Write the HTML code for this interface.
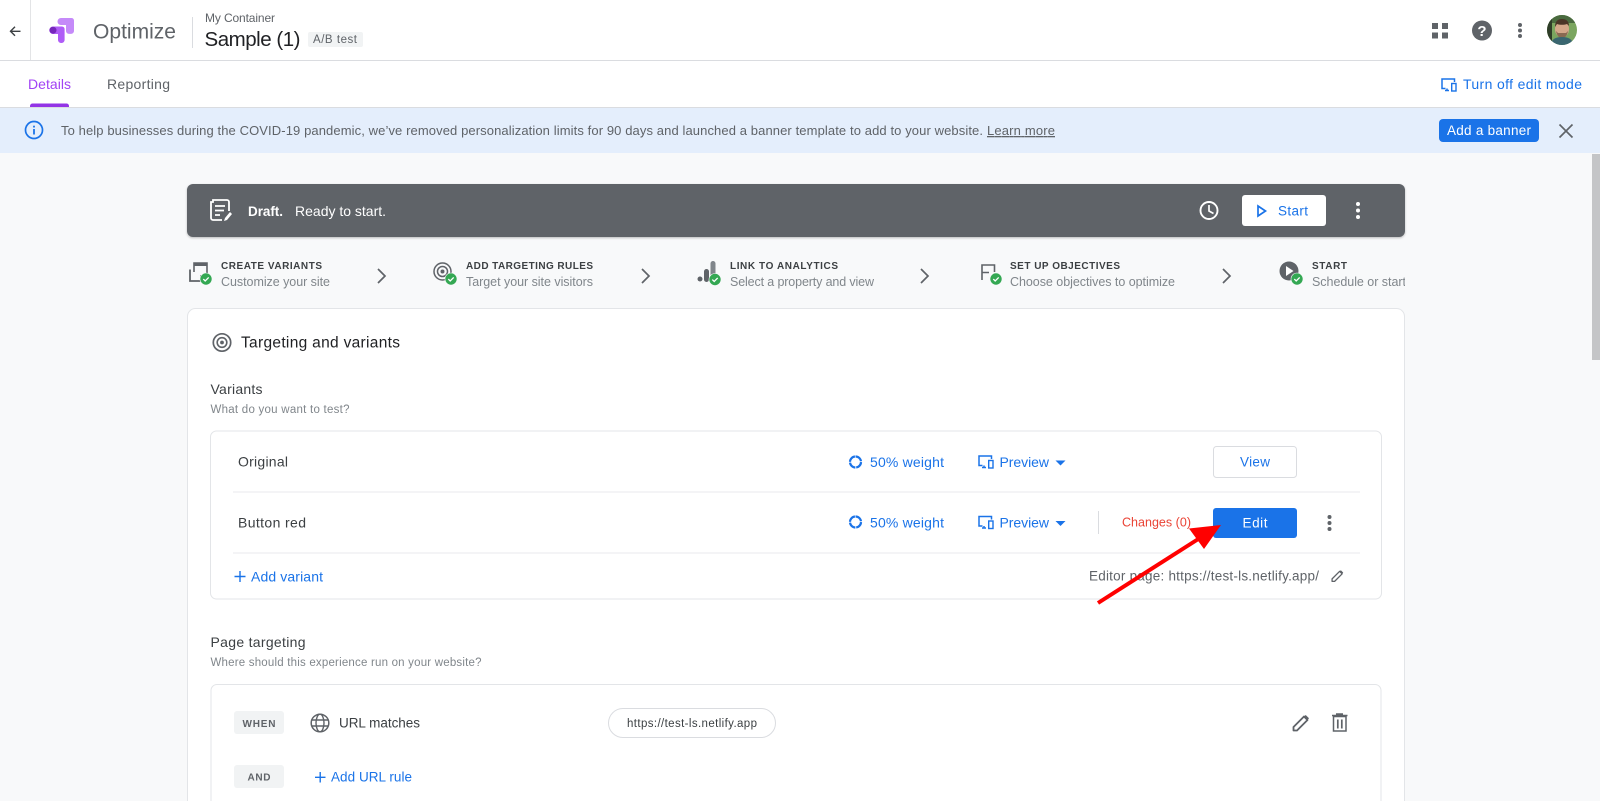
<!DOCTYPE html>
<html lang="en">
<head>
<meta charset="utf-8">
<title>Optimize</title>
<style>
html,body{margin:0;padding:0;width:1600px;height:801px;overflow:hidden;background:#f8f9fa}
svg{display:block}
text{font-family:"Liberation Sans",Arial,sans-serif;white-space:pre}
.t13{font-size:14px}.t12{font-size:12.500px}.t11{font-size:11.500px}
.blue{fill:#1a73e8}.gray{fill:#5f6368}.dark{fill:#202124}.mid{fill:#3c4043}.lt{fill:#80868b}
.cap{font-size:10px;font-weight:bold;fill:#3c4043}
.sub{font-size:12.500px;fill:#80868b}
</style>
</head>
<body>
<svg width="1600" height="801" viewBox="0 0 1600 801" xmlns="http://www.w3.org/2000/svg">
<defs>
<symbol id="prev" viewBox="0 0 16 14" overflow="visible">
<path d="M4.500 10.500H1V1h12.500v3M4 12.500h4M6 10.500v2" fill="none" stroke="#1a73e8" stroke-width="1.500"/>
<rect x="10.700" y="5.500" width="4.300" height="7.500" fill="none" stroke="#1a73e8" stroke-width="1.400"/>
</symbol>
<symbol id="weight" viewBox="0 0 14 14" overflow="visible">
<circle cx="7" cy="7" r="5.500" fill="none" stroke="#1a73e8" stroke-width="2.200" stroke-dasharray="7.800 .85" transform="rotate(-90 7 7)"/>
</symbol>
<symbol id="badge" viewBox="0 0 12 12" overflow="visible">
<circle cx="6" cy="6" r="6.300" fill="#f8f9fa"/>
<circle cx="6" cy="6" r="5.700" fill="#34a853"/>
<path d="M3.300 6.100l1.900 1.900 3.500-3.600" fill="none" stroke="#fff" stroke-width="1.300"/>
</symbol>
<symbol id="chev" viewBox="0 0 10 16" overflow="visible">
<path d="M1 1l7 7-7 7" fill="none" stroke="#5f6368" stroke-width="1.700"/>
</symbol>
<symbol id="pen" viewBox="0 0 18 18" overflow="visible">
<path d="M1.500 16.500v-3.500L12 2.500l3.500 3.500L5 16.500z" fill="none" stroke="#5f6368" stroke-width="1.800" stroke-linejoin="round"/>
<path d="M11.500 3l3.500 3.500 2-2.200-3.300-3.300z" fill="#5f6368"/>
</symbol>
<clipPath id="av"><circle cx="1562" cy="30" r="15"/></clipPath>
<clipPath id="stepclip"><rect x="170" y="250" width="1235" height="50"/></clipPath>
<filter id="soft" x="-5%" y="-20%" width="110%" height="140%"><feDropShadow dx="0" dy="1" stdDeviation="1" flood-color="#000" flood-opacity=".25"/></filter>
</defs>

<rect width="1600" height="801" fill="#f8f9fa"/>

<!-- header -->
<rect width="1600" height="60" fill="#fff"/>
<rect y="60" width="1600" height="1" fill="#dadce0"/>
<rect x="30" width="1" height="60" fill="#e3e4e6"/>
<path d="M20.500 31.300H11M15 26.800l-4.500 4.500 4.500 4.500" fill="none" stroke="#3c4043" stroke-width="1.400"/>
<path d="M61 18h10.500a2.500 2.500 0 0 1 2.500 2.500V31a2.900 2.900 0 0 1-2.900 2.900h-2.200a2.900 2.900 0 0 1-2.900-2.900v-6H61a3.500 3.500 0 0 1 0-7z" fill="#c58af9"/>
<path d="M53 26.500h9a2.600 2.600 0 0 1 2.600 2.600V40a3 3 0 0 1-3 3h-.6a3 3 0 0 1-3-3v-6H53a3.700 3.700 0 0 1 0-7.500z" fill="#af5cf7"/>
<circle cx="53" cy="30.200" r="3.500" fill="#7627bb"/>
<text x="93" y="38.500" font-size="21.500" fill="#5f6368" textLength="83" lengthAdjust="spacingAndGlyphs">Optimize</text>
<rect x="192" y="17" width="1" height="31" fill="#dadce0"/>
<text x="205" y="22" font-size="12" class="gray" textLength="70">My Container</text>
<text x="204.500" y="46" font-size="20.500" fill="#202124" textLength="96">Sample (1)</text>
<rect x="308" y="32" width="55" height="15" rx="2" fill="#f1f3f4"/>
<text x="313" y="43" class="t11 gray" textLength="44">A/B test</text>

<g fill="#5f6368">
<rect x="1432" y="23" width="6" height="6"/><rect x="1442" y="23" width="6" height="6"/>
<rect x="1432" y="32.500" width="6" height="6"/><rect x="1442" y="32.500" width="6" height="6"/>
<circle cx="1482" cy="30.500" r="10"/>
<circle cx="1520" cy="25" r="2"/><circle cx="1520" cy="30.500" r="2"/><circle cx="1520" cy="36" r="2"/>
</g>
<text x="1482" y="36" text-anchor="middle" font-size="15" font-weight="bold" fill="#fff">?</text>
<g clip-path="url(#av)">
<rect x="1547" y="15" width="30" height="30" fill="#7ba65f"/>
<rect x="1547" y="15" width="30" height="8" fill="#4a6a3f"/>
<rect x="1547" y="15" width="5" height="30" fill="#2f3d28"/>
<ellipse cx="1562" cy="29" rx="7" ry="8.500" fill="#d4a88a"/>
<path d="M1555 27c0-6 3-8 7-8s7 2 7 7l-2-2c-3 1-7 1-10 0z" fill="#4a3527"/>
<path d="M1556 31c1 5 3 7 6 7s5-2 6-7l-2 2h-8z" fill="#8a6a52"/>
<path d="M1550 46c1-7 6-9 12-9s11 2 12 9z" fill="#3a6670"/>
</g>

<!-- tabs -->
<rect y="61" width="1600" height="46" fill="#fff"/>
<text x="28" y="89" font-size="14" fill="#a142f4" textLength="43">Details</text>
<text x="107" y="89" font-size="14" fill="#5f6368" textLength="63">Reporting</text>
<path d="M30 107v-1a2.500 2.500 0 0 1 2.500-2.500h34a2.500 2.500 0 0 1 2.500 2.500v1z" fill="#9334e6"/>
<g transform="translate(1441 78)"><use href="#prev" width="16" height="14"/></g>
<text x="1463" y="89" font-size="14" class="blue" textLength="119">Turn off edit mode</text>

<!-- banner -->
<rect y="107" width="1600" height="46" fill="#e4eefc"/>
<rect y="107" width="1600" height="1" fill="#dadce0"/>
<circle cx="34" cy="130" r="8.500" fill="none" stroke="#1a73e8" stroke-width="1.700"/>
<rect x="33.100" y="129" width="1.800" height="5.500" fill="#1a73e8"/><rect x="33.100" y="125.700" width="1.800" height="1.800" fill="#1a73e8"/>
<text x="61" y="135" font-size="13" class="gray" textLength="922">To help businesses during the COVID-19 pandemic, we’ve removed personalization limits for 90 days and launched a banner template to add to your website.</text>
<text x="987" y="135" font-size="13" class="gray" textLength="68" text-decoration="underline">Learn more</text>
<rect x="1439" y="119" width="100" height="23" rx="4" fill="#1a73e8"/>
<text x="1447" y="135" font-size="13.500" fill="#fff" textLength="84">Add a banner</text>
<path d="M1559.500 124.500l13 13m0-13l-13 13" stroke="#5f6368" stroke-width="1.700" fill="none"/>
<rect x="1592" y="154" width="8" height="206" fill="#c4c5c7"/>

<!-- draft bar -->
<rect x="187" y="184" width="1218" height="53" rx="6" fill="#5f6368" filter="url(#soft)"/>
<path d="M222 220h-9a2 2 0 0 1-2-2v-16h2v-2h14a2 2 0 0 1 2 2v9" fill="none" stroke="#fff" stroke-width="1.800"/>
<path d="M215 206h10M215 210.500h9M215 215h5" stroke="#fff" stroke-width="1.700"/>
<path d="M224 221l1-3 5-6 2 2-5 6z" fill="#fff"/>
<text x="248" y="216" font-size="13.500" font-weight="bold" fill="#fff" textLength="35">Draft.</text>
<text x="295" y="216" font-size="14" fill="#fff" textLength="91">Ready to start.</text>
<circle cx="1209" cy="210.500" r="8.500" fill="none" stroke="#fff" stroke-width="1.900"/>
<path d="M1209 205v6l4.500 2.500" fill="none" stroke="#fff" stroke-width="1.700"/>
<rect x="1242" y="195" width="84" height="31" rx="3" fill="#fff"/>
<path d="M1258 206v10l7.500-5z" fill="none" stroke="#1a73e8" stroke-width="1.700"/>
<text x="1278" y="215.500" font-size="13.500" class="blue" textLength="30">Start</text>
<circle cx="1358" cy="204" r="2" fill="#fff"/><circle cx="1358" cy="210.500" r="2" fill="#fff"/><circle cx="1358" cy="217" r="2" fill="#fff"/>

<!-- steps -->
<g clip-path="url(#stepclip)">
<path d="M194 272v-9h13v13h-7" fill="none" stroke="#5f6368" stroke-width="1.600"/>
<rect x="194" y="263" width="13" height="3" fill="#5f6368"/>
<path d="M190 269.500v11.500h11" fill="none" stroke="#5f6368" stroke-width="1.800"/>
<use href="#badge" x="200" y="273" width="12" height="12"/>
<text x="221" y="269" class="cap" textLength="101">CREATE VARIANTS</text>
<text x="221" y="286" class="sub" textLength="109">Customize your site</text>
<use href="#chev" x="377" y="268" width="10" height="16"/>

<circle cx="442.500" cy="271.500" r="8.500" fill="none" stroke="#5f6368" stroke-width="1.500"/>
<circle cx="442.500" cy="271.500" r="5" fill="none" stroke="#5f6368" stroke-width="1.500"/>
<circle cx="442.500" cy="271.500" r="2" fill="#5f6368"/>
<use href="#badge" x="445" y="273" width="12" height="12"/>
<text x="466" y="269" class="cap" textLength="127">ADD TARGETING RULES</text>
<text x="466" y="286" class="sub" textLength="127">Target your site visitors</text>
<use href="#chev" x="641" y="268" width="10" height="16"/>

<circle cx="700" cy="279" r="2.500" fill="#5f6368"/>
<rect x="704" y="269" width="5" height="13" rx="2.500" fill="#5f6368"/>
<rect x="710.500" y="261" width="5" height="19" rx="2.500" fill="#80868b"/>
<use href="#badge" x="709" y="273.500" width="12" height="12"/>
<text x="730" y="269" class="cap" textLength="108">LINK TO ANALYTICS</text>
<text x="730" y="286" class="sub" textLength="144">Select a property and view</text>
<use href="#chev" x="920" y="268" width="10" height="16"/>

<path d="M982 280v-15h12.500v7M982 272.500h7" fill="none" stroke="#5f6368" stroke-width="1.600"/>
<use href="#badge" x="990" y="273" width="12" height="12"/>
<text x="1010" y="269" class="cap" textLength="110">SET UP OBJECTIVES</text>
<text x="1010" y="286" class="sub" textLength="165">Choose objectives to optimize</text>
<use href="#chev" x="1222" y="268" width="10" height="16"/>

<circle cx="1289" cy="271" r="9.500" fill="#5f6368"/>
<path d="M1286 266v10l7.500-5z" fill="#fff"/>
<use href="#badge" x="1291" y="273" width="12" height="12"/>
<text x="1312" y="269" class="cap" textLength="35">START</text>
<text x="1312" y="286" class="sub" textLength="94">Schedule or start</text>
</g>

<!-- outer card -->
<rect x="187.500" y="308.500" width="1217" height="520" rx="8" fill="#fff" stroke="#e3e5e8"/>
<circle cx="222" cy="342.500" r="8.700" fill="none" stroke="#5f6368" stroke-width="1.700"/>
<circle cx="222" cy="342.500" r="4.800" fill="none" stroke="#5f6368" stroke-width="1.600"/>
<circle cx="222" cy="342.500" r="1.900" fill="#5f6368"/>
<text x="241" y="347.500" font-size="15.500" class="dark" textLength="159">Targeting and variants</text>
<text x="210.500" y="394" class="t13 mid" textLength="52">Variants</text>
<text x="210.500" y="413" class="t11 lt" textLength="139">What do you want to test?</text>

<!-- variants card -->
<rect x="210.500" y="431" width="1171" height="168" rx="6" fill="#fff" stroke="#e3e5e8"/>
<rect x="233" y="491.500" width="1127" height="1" fill="#e8eaed"/>
<rect x="233" y="552.500" width="1127" height="1" fill="#e8eaed"/>
<text x="238" y="466.500" class="t13 mid" textLength="50">Original</text>
<text x="238" y="527.500" class="t13 mid" textLength="68">Button red</text>

<use href="#weight" x="848.500" y="455" width="14" height="14"/>
<text x="870" y="467" class="t13 blue" textLength="74">50% weight</text>
<use href="#prev" x="978" y="455" width="16" height="14"/>
<text x="999.500" y="467" class="t13 blue" textLength="49.500">Preview</text>
<path d="M1055.500 460.500h10l-5 5z" fill="#1a73e8"/>
<rect x="1213.500" y="446.500" width="83" height="31" rx="3" fill="#fff" stroke="#dadce0"/>
<text x="1255" y="466.500" font-size="13.500" class="blue" text-anchor="middle" textLength="30">View</text>

<use href="#weight" x="848.500" y="515" width="14" height="14"/>
<text x="870" y="527.500" class="t13 blue" textLength="74">50% weight</text>
<use href="#prev" x="978" y="515.500" width="16" height="14"/>
<text x="999.500" y="527.500" class="t13 blue" textLength="49.500">Preview</text>
<path d="M1055.500 521h10l-5 5z" fill="#1a73e8"/>
<rect x="1098" y="511" width="1" height="23" fill="#dadce0"/>
<text x="1122" y="526.500" class="t12" fill="#ea4335" textLength="69">Changes (0)</text>
<rect x="1213" y="508" width="84" height="30" rx="3" fill="#1a73e8"/>
<text x="1255" y="527.500" font-size="13.500" fill="#fff" text-anchor="middle" textLength="25">Edit</text>
<circle cx="1329.500" cy="517" r="2" fill="#5f6368"/><circle cx="1329.500" cy="523" r="2" fill="#5f6368"/><circle cx="1329.500" cy="529" r="2" fill="#5f6368"/>

<path d="M234.500 576.500h11M240 571v11" stroke="#1a73e8" stroke-width="1.400"/>
<text x="251" y="581.500" class="t13 blue" textLength="72">Add variant</text>
<text x="1089" y="580.500" font-size="13.500" class="gray" textLength="230">Editor page: https://test-ls.netlify.app/</text>
<g transform="translate(1331 569.500) scale(.72)"><use href="#pen" width="18" height="18"/></g>

<!-- arrow -->
<path d="M1098 603L1203 536" stroke="#ff0000" stroke-width="4" fill="none"/>
<path d="M1221 525L1189 528.500L1204 549z" fill="#ff0000"/>

<!-- page targeting -->
<text x="210.500" y="647" class="t13 mid" textLength="95">Page targeting</text>
<text x="210.500" y="666" class="t11 lt" textLength="271">Where should this experience run on your website?</text>
<rect x="211" y="684.500" width="1170" height="140" rx="6" fill="#fff" stroke="#e3e5e8"/>

<rect x="234" y="711" width="50" height="23" rx="3" fill="#f1f3f4"/>
<text x="259" y="727" font-size="10" font-weight="bold" class="gray" text-anchor="middle" textLength="33">WHEN</text>
<circle cx="320" cy="723" r="8.800" fill="none" stroke="#5f6368" stroke-width="1.500"/>
<ellipse cx="320" cy="723" rx="4" ry="8.800" fill="none" stroke="#5f6368" stroke-width="1.400"/>
<path d="M312 720h16M312 726h16" stroke="#5f6368" stroke-width="1.400"/>
<text x="339" y="727.500" font-size="13.500" class="mid" textLength="81">URL matches</text>
<rect x="608.500" y="708.500" width="167" height="29" rx="14.500" fill="#fff" stroke="#dadce0"/>
<text x="627" y="727" class="t11 mid" textLength="130">https://test-ls.netlify.app</text>
<use href="#pen" x="1292" y="714" width="18" height="18"/>
<path d="M1333.500 716.500h12.500v14.500h-12.500z" fill="none" stroke="#5f6368" stroke-width="1.500"/>
<path d="M1332 715.500h15.500M1336 714h7" stroke="#5f6368" stroke-width="1.500"/>
<path d="M1337.800 719.500v9M1341.800 719.500v9" stroke="#5f6368" stroke-width="1.700"/>

<rect x="234" y="765" width="50" height="23" rx="3" fill="#f1f3f4"/>
<text x="259" y="780.500" font-size="10" font-weight="bold" class="gray" text-anchor="middle" textLength="23">AND</text>
<path d="M315 777.300h10.500M320.200 772v10.500" stroke="#1a73e8" stroke-width="1.400"/>
<text x="331" y="781.500" font-size="13.500" class="blue" textLength="81">Add URL rule</text>
</svg>
</body>
</html>
